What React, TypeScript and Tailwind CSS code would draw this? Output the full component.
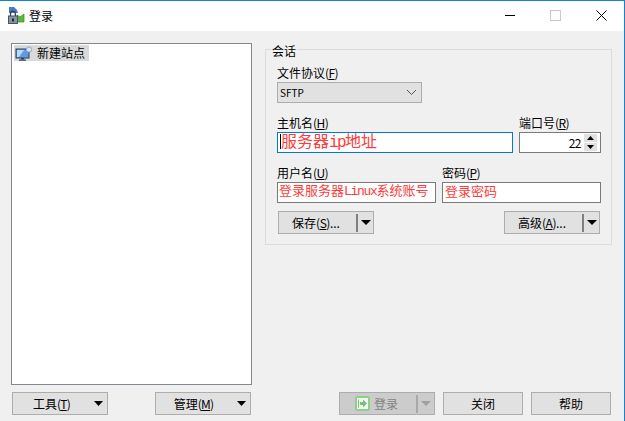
import React from "react";

const sans = "font-['Noto_Sans_CJK_SC','Microsoft_YaHei',sans-serif]";

function Caret({ className = "", color = "#000000", w = 10 }: { className?: string; color?: string; w?: number }) {
  return (
    <svg width={w} height="5" viewBox={`0 0 ${w} 5`} className={className}>
      <path d={`M0 0H${w}L${w / 2} 5Z`} fill={color} />
    </svg>
  );
}

function Label({ text, k }: { text: string; k: string }) {
  return (
    <div className="h-[15px] leading-[15px] text-[12px] text-black whitespace-nowrap">
      {text}
      <span className="tracking-[-0.6px]">(<span className="underline">{k}</span>)</span>
    </div>
  );
}

function Plain({ width, children }: { width: string; children: React.ReactNode }) {
  return (
    <div className={`${width} h-[23px] flex items-center justify-center border border-[#adadad] bg-[#e1e1e1] text-[12px] text-black`}>
      {children}
    </div>
  );
}

function MenuButton({ text, k, pad }: { text: string; k: string; pad: string }) {
  return (
    <div className="w-[96px] h-[23px] flex items-center border border-[#adadad] bg-[#e1e1e1] text-[12px] text-black">
      <div className={`flex-1 text-center ${pad} whitespace-nowrap`}>
        {text}
        <span className="tracking-[-0.8px]">(<span className="underline">{k}</span>)</span>
      </div>
      <Caret w={9} className="mr-[4px] ml-[12px]" />
    </div>
  );
}

function SplitButton({ text, k }: { text: string; k: string }) {
  return (
    <div className="w-[96px] h-[23px] flex items-center border border-[#adadad] bg-[#e1e1e1] text-[12px] text-black">
      <div className="flex-1 pr-[3px] text-center whitespace-nowrap">
        {text}
        <span className="tracking-[-0.5px]">(<span className="underline">{k}</span>)</span>...
      </div>
      <div className="w-[2px] h-[18px] bg-[#808080]" />
      <Caret className="mx-[2.5px]" />
    </div>
  );
}

function PaintedInput({ width, children }: { width: string; children: React.ReactNode }) {
  return (
    <div className={`${width} h-[21px] mt-[2px] flex items-center border border-[#7a7a7a] bg-white pb-[4px] text-[13px] leading-[15px] text-[#ff3b3b] whitespace-nowrap`}>
      {children}
    </div>
  );
}

export default function App() {
  return (
    <div className={`w-[625px] h-[421px] flex flex-col bg-[#f0f0f0] border-t border-r border-[#0f83da] overflow-hidden ${sans}`}>
      <header className="h-[30px] shrink-0 flex items-center bg-white pb-[1px]">
        <svg width="17" height="17" viewBox="0 0 17 17" className="ml-[8px] mr-[4px]">
          <path d="M1 0H6L9 3L10 6H1Z" fill="#3f7fd0" />
          <path d="M9 8L12 10L16 7V15H9Z" fill="#5cb83c" stroke="#2f8a20" strokeWidth="0.7" />
          <rect x="0.5" y="9" width="9" height="7.5" fill="#8794a3" stroke="#4a5563" />
          <path d="M2.5 9V6.5A2.4 2.4 0 0 1 7.3 6.5V9" fill="none" stroke="#3a3f46" strokeWidth="1.3" />
          <rect x="4" y="11.5" width="2" height="3" fill="#222b35" />
        </svg>
        <span className="text-[12px] text-black leading-none">登录</span>
        <div className="flex-1" />
        <div className="w-[10px] h-px bg-black mr-[35px]" />
        <div className="w-[11px] h-[11px] border border-[#c8c8c8] mr-[35px]" />
        <svg width="11" height="11" viewBox="0 0 11 11" className="mr-[17px]">
          <path d="M0.5 0.5L10.5 10.5M10.5 0.5L0.5 10.5" stroke="#000" strokeWidth="1" />
        </svg>
      </header>

      <main className="flex-1 flex pl-[11px] pt-[12px]">
        <div className="w-[241px] flex flex-col">
          <div className="h-[342px] border border-[#828790] bg-white p-[2px] pt-[1px]">
            <div className="w-[75px] h-[16px] flex items-center bg-[#d9d9d9]">
              <svg width="18" height="15" viewBox="0 0 18 15" className="ml-[1px]">
                <rect x="1" y="3" width="13" height="9" fill="#5b9be8" stroke="#2c3f58" />
                <path d="M2 4H9L4 11H2Z" fill="#bcd9f7" />
                <rect x="6" y="12" width="3" height="1.5" fill="#2c3f58" />
                <rect x="4" y="13.5" width="7" height="1.2" fill="#2c3f58" />
                <circle cx="14" cy="3.5" r="2.6" fill="#dbe6f4" stroke="#8ea6c4" />
              </svg>
              <span className="ml-[4px] text-[12px] text-black leading-none whitespace-nowrap">新建站点</span>
            </div>
          </div>
          <div className="mt-[7px] flex justify-between px-[1px]">
            <MenuButton text="工具" k="T" pad="pl-[8px]" />
            <MenuButton text="管理" k="M" pad="pl-[6px]" />
          </div>
        </div>

        <div className="flex-1 flex flex-col ml-[13px]">
          <section className="relative mt-[6px] w-[347px] h-[196px] border border-[#dcdcdc] pl-[11px] pr-[10px] pt-[15px]">
            <span className="absolute left-[5px] top-[-7px] bg-[#f0f0f0] px-[1px] text-[12px] leading-[15px] text-black">会话</span>
            <Label text="文件协议" k="F" />
            <div className="mt-[2px] w-[145px] h-[21px] flex items-center justify-between border border-[#adadad] bg-[#e1e1e1] pl-[2px] pr-[3px] text-[10px] text-black">
              <span>SFTP</span>
              <svg width="11" height="7" viewBox="0 0 11 7" className="mr-[1px]">
                <path d="M1 1L5.5 5.5L10 1" fill="none" stroke="#555" />
              </svg>
            </div>

            <div className="mt-[12px] flex gap-[6px]">
              <div>
                <Label text="主机名" k="H" />
                <div className="w-[236px] h-[21px] mt-[2px] flex items-center border border-[#0078d7] bg-white pb-[2px] text-[16px] leading-[17px] text-[#ff3b3b] whitespace-nowrap">
                  <span className="w-px h-[15px] bg-black ml-[2px]" />
                  <span>服务器<span className="font-['Liberation_Mono'] tracking-[-1.6px]">ip</span>地址</span>
                </div>
              </div>
              <div>
                <Label text="端口号" k="R" />
                <div className="w-[82px] h-[21px] mt-[2px] flex items-center justify-end border border-[#7a7a7a] bg-white text-[12px] text-black">
                  <span className="mr-[3px] tracking-[-0.5px]">22</span>
                  <div className="w-[13px] h-[17px] mr-[3px] flex flex-col justify-between">
                    <div className="h-[8px] flex items-center justify-center bg-[#e1e1e1]">
                      <svg width="7" height="4" viewBox="0 0 7 4"><path d="M0 4H7L3.5 0Z" fill="#000" /></svg>
                    </div>
                    <div className="h-[8px] flex items-center justify-center bg-[#e1e1e1]">
                      <svg width="7" height="4" viewBox="0 0 7 4"><path d="M0 0H7L3.5 4Z" fill="#000" /></svg>
                    </div>
                  </div>
                </div>
              </div>
            </div>

            <div className="mt-[12px] flex gap-[6px]">
              <div>
                <Label text="用户名" k="U" />
                <PaintedInput width="w-[159px]">
                  <span className="ml-[1px]">登录服务器<span className="font-['Liberation_Mono'] tracking-[-1.3px]">Linux</span>系统账号</span>
                </PaintedInput>
              </div>
              <div>
                <Label text="密码" k="P" />
                <PaintedInput width="w-[159px]">
                  <span className="ml-[2px]">登录密码</span>
                </PaintedInput>
              </div>
            </div>

            <div className="mt-[8px] flex justify-between px-[1px]">
              <SplitButton text="保存" k="S" />
              <SplitButton text="高级" k="A" />
            </div>
          </section>

          <div className="flex-1" />
          <div className="flex gap-[8px] mb-[6px] ml-[74px]">
            <div className="w-[96px] h-[23px] flex items-center border border-[#adadad] bg-[#cccccc] text-[12px] text-[#838383]">
              <svg width="15" height="15" viewBox="0 0 15 15" className="ml-[15px] mr-[4px]">
                <rect x="1" y="1" width="13" height="13" rx="1.5" fill="#f4f7f2" stroke="#8fce8b" strokeWidth="2" />
                <path d="M3.5 3.5V11.5" stroke="#78c078" />
                <path d="M5 6H8V3.5L12 7.5L8 11.5V9H5Z" fill="#78c078" />
              </svg>
              <span className="whitespace-nowrap">登录</span>
              <div className="w-[2px] h-[18px] bg-[#a8a8a8] ml-[18px]" />
              <Caret className="ml-[2.5px]" color="#a0a0a0" />
            </div>
            <Plain width="w-[80px]">关闭</Plain>
            <Plain width="w-[80px]">帮助</Plain>
          </div>
        </div>
      </main>
    </div>
  );
}
